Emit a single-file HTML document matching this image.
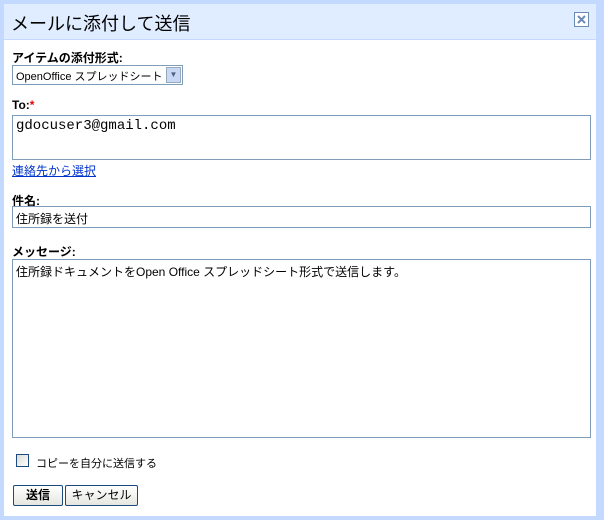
<!DOCTYPE html>
<html><head><meta charset="utf-8"><style>
*{box-sizing:border-box;margin:0;padding:0}
body{width:604px;height:520px;background:#c3d9ff;position:relative;overflow:hidden;font-family:"Liberation Sans","Noto Sans CJK JP",sans-serif;font-size:12px;color:#000}
.panel{position:absolute;left:4px;top:4px;width:592px;height:512px;background:#fff}
.hdr{position:absolute;left:0;top:0;width:592px;height:36px;background:#e0ecff;border-bottom:1px solid #c3d9ff}
.hdr h1{position:absolute;left:7px;top:6px;font-size:18px;font-weight:normal}
.x{position:absolute;left:570px;top:8px;width:15px;height:15px;border:1px solid #6b8bb5;background:#fff}
.a{position:absolute}
.lbl{font-weight:bold;font-size:12px}
.box{border:1px solid #7f9db9;background:#fff}
.btn{position:absolute;top:481px;height:21px;border:1px solid #1d4a7e;border-radius:2px;background:linear-gradient(#fff,#e6e6e0);font-size:12px;text-align:center;line-height:19px}
</style></head><body>
<div class="panel">
<div class="hdr"><h1>メールに添付して送信</h1>
<div class="x"><svg width="13" height="13" viewBox="0 0 13 13"><path d="M3 3L10 10M10 3L3 10" stroke="#6b8bb5" stroke-width="2"/></svg></div></div>
<div class="a lbl" style="left:8px;top:45px">アイテムの添付形式:</div>
<div class="a box" style="left:8px;top:61px;width:171px;height:20px;font-size:11px;padding:2px 3px">OpenOffice スプレッドシート
<div style="position:absolute;right:1px;top:1px;width:15px;height:16px;background:#c8d8f4;border:1px solid #9ab;font-size:8px;text-align:center;line-height:14px;color:#4d6185">▼</div></div>
<div class="a lbl" style="left:8px;top:94px">To:<span style="color:#e00">*</span></div>
<div class="a box" style="left:8px;top:111px;width:579px;height:45px;font-family:'Liberation Mono',monospace;font-size:14px;padding:2px 3px">gdocuser3@gmail.com</div>
<div class="a" style="left:8px;top:158px;color:#0033cc;text-decoration:underline">連絡先から選択</div>
<div class="a lbl" style="left:8px;top:188px">件名:</div>
<div class="a box" style="left:8px;top:202px;width:579px;height:22px;padding:3px 3px">住所録を送付</div>
<div class="a lbl" style="left:8px;top:239px">メッセージ:</div>
<div class="a box" style="left:8px;top:255px;width:579px;height:179px;padding:3px 3px">住所録ドキュメントをOpen Office スプレッドシート形式で送信します。</div>
<div class="a" style="left:12px;top:450px;width:13px;height:13px;border:1px solid #1d4a7e;background:linear-gradient(135deg,#dcdcd5,#fff)"></div>
<div class="a" style="left:32px;top:451px;font-size:11px">コピーを自分に送信する</div>
<div class="btn" style="left:9px;width:50px;font-weight:bold">送信</div>
<div class="btn" style="left:61px;width:73px">キャンセル</div>
</div>
</body></html>
